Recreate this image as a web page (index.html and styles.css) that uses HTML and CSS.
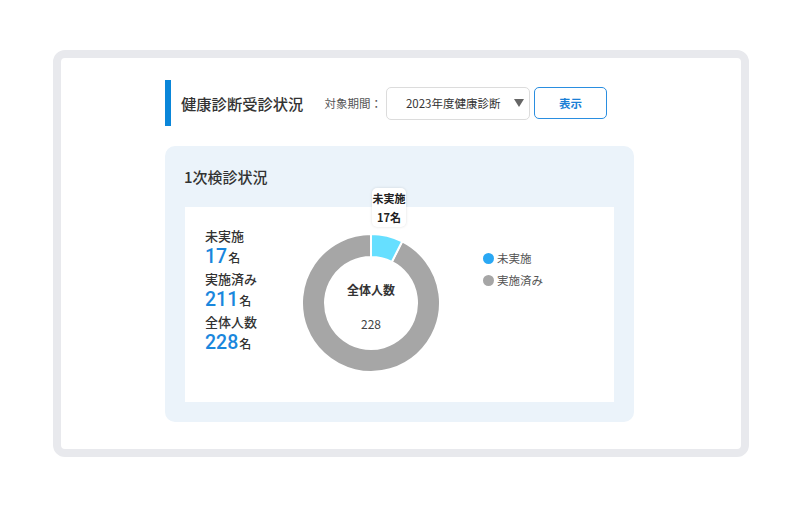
FILE: index.html
```html
<!DOCTYPE html>
<html lang="ja">
<head>
<meta charset="utf-8">
<link rel="stylesheet" href="styles.css">
</head>
<body>
<div class="frame">
  <div class="header">
    <div class="bar"></div>
    <h1 class="title">健康診断受診状況</h1>
    <span class="label">対象期間：</span>
    <div class="select"><span class="select-text">2023年度健康診断</span><span class="caret"></span></div>
    <button class="btn">表示</button>
  </div>
  <section class="card">
    <h2 class="card-title">1次検診状況</h2>
    <div class="panel">
      <div class="stats">
        <div class="stat-label">未実施</div>
        <div class="stat-value">17<span class="unit">名</span></div>
        <div class="stat-label">実施済み</div>
        <div class="stat-value">211<span class="unit">名</span></div>
        <div class="stat-label">全体人数</div>
        <div class="stat-value">228<span class="unit">名</span></div>
      </div>
      <div class="chart">
        <svg class="donut" width="140" height="140" viewBox="0 0 140 140">
          <path class="seg-gray" d="M101.15,8.43 A69,69 0 1 1 70,1 L70,24 A46,46 0 1 0 90.77,28.95 Z"/>
          <path class="seg-cyan" d="M70,1 A69,69 0 0 1 101.15,8.43 L90.77,28.95 A46,46 0 0 0 70,24 Z"/>
          <text class="center-title" x="70" y="62" text-anchor="middle">全体人数</text>
          <text class="center-value" x="70" y="96" text-anchor="middle">228</text>
        </svg>
        <div class="tooltip"><div>未実施</div><div>17名</div></div>
      </div>
      <ul class="legend">
        <li><span class="dot dot-cyan"></span>未実施</li>
        <li><span class="dot dot-gray"></span>実施済み</li>
      </ul>
    </div>
  </section>
</div>
</body>
</html>
```
FILE: styles.css
```css
* { box-sizing: border-box; }
html, body { margin: 0; padding: 0; background: #ffffff; }
body {
  font-family: "Noto Sans CJK JP", "Noto Sans", sans-serif;
  color: #333333;
  width: 800px;
  height: 514px;
  overflow: hidden;
}
.frame {
  margin: 50px 0 0 53px;
  width: 696px;
  height: 407px;
  border: 8px solid #e8e9ed;
  border-radius: 12px;
  padding: 22px 0 0 104px;
}
.header {
  display: flex;
  align-items: center;
  height: 46px;
}
.bar {
  flex: none;
  width: 6px;
  height: 46px;
  background: #0a86d9;
}
.title {
  margin: 0 0 0 10px;
  font-size: 15.3px;
  line-height: 22px;
  font-weight: 500;
  color: #333;
  white-space: nowrap;
}
.label {
  margin-left: 21px;
  font-size: 11.5px;
  color: #555;
  white-space: nowrap;
}
.select {
  flex: none;
  margin-left: 4px;
  width: 144px;
  height: 33px;
  border: 1px solid #dcdcdc;
  border-radius: 5px;
  display: flex;
  align-items: center;
  padding-left: 19px;
  padding-right: 5px;
}
.select-text {
  font-size: 11.5px;
  color: #333;
  flex: 1;
  white-space: nowrap;
}
.caret {
  flex: none;
  width: 0;
  height: 0;
  border-left: 5px solid transparent;
  border-right: 5px solid transparent;
  border-top: 8px solid #666;
}
.btn {
  flex: none;
  margin-left: 4px;
  width: 73px;
  height: 32px;
  border: 1px solid #2a8ee0;
  border-radius: 5px;
  background: #fff;
  color: #1a7fd6;
  font-family: inherit;
  font-size: 11.5px;
  font-weight: 700;
  padding: 0;
}
.card {
  margin-top: 20px;
  width: 469px;
  height: 276px;
  background: #ebf3fa;
  border-radius: 10px;
  padding: 20px;
}
.card-title {
  margin: 0 0 19px -1px;
  font-size: 15px;
  line-height: 22px;
  height: 22px;
  font-weight: 500;
  color: #333;
}
.panel {
  width: 429px;
  height: 195px;
  background: #fff;
  display: flex;
  align-items: flex-start;
  padding-left: 20px;
}
.stats {
  flex: none;
  width: 96px;
  padding-top: 18px;
}
.stat-label {
  height: 21px;
  font-size: 13px;
  line-height: 21px;
  font-weight: 500;
  color: #333;
  white-space: nowrap;
}
.stat-value {
  height: 22px;
  font-family: Roboto, "Noto Sans", sans-serif;
  font-size: 19.5px;
  line-height: 22px;
  color: #1a87dd;
  font-weight: 500;
  white-space: nowrap;
}
.unit {
  font-family: "Noto Sans CJK JP", sans-serif;
  font-size: 12px;
  line-height: 12px;
  font-weight: 500;
  color: #333;
  margin-left: 1px;
}
.chart {
  flex: none;
  position: relative;
  margin-top: 26px;
  width: 140px;
  height: 140px;
}
.donut { display: block; }
.seg-gray { fill: #a6a6a6; stroke: #fff; stroke-width: 2; }
.seg-cyan { fill: #66dfff; stroke: #fff; stroke-width: 2; }
.center-title {
  font-family: "Noto Sans CJK JP", sans-serif;
  font-size: 12px;
  font-weight: 700;
  fill: #333;
}
.center-value {
  font-family: "Noto Sans CJK JP", sans-serif;
  font-size: 12px;
  fill: #444;
}
.tooltip {
  position: absolute;
  left: 71px;
  top: -45px;
  width: 34px;
  height: 39px;
  background: #fff;
  border-radius: 5px;
  box-shadow: 0 0 3px rgba(0,0,0,0.12);
  font-size: 11px;
  font-weight: 700;
  line-height: 19px;
  text-align: center;
  color: #222;
  padding-top: 1px;
}
.legend {
  list-style: none;
  margin: 40px 0 0 42px;
  padding: 0;
}
.legend li {
  display: flex;
  align-items: center;
  height: 22px;
  font-size: 11.5px;
  line-height: 22px;
  color: #555;
  white-space: nowrap;
}
.dot {
  flex: none;
  width: 11px;
  height: 11px;
  border-radius: 50%;
  margin-right: 3px;
}
.dot-cyan { background: #2aa8f4; }
.dot-gray { background: #a6a6a6; }
```
